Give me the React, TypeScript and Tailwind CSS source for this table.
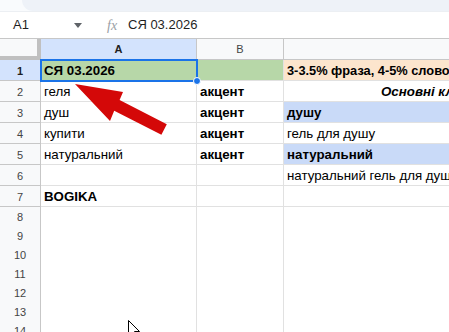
import React from "react";

const F = { fontFamily: '"Liberation Sans", Arial, sans-serif' };

type Cell = { t?: string; cls?: string; bg?: string };
type Row = { n: number; h: string; a?: Cell; b?: Cell; c?: Cell; sel?: boolean };

const rows: Row[] = [
  { n: 1, h: "h-[21px]", sel: true, a: { t: "СЯ 03.2026", cls: "font-bold", bg: "bg-[#b7d7a8]" }, b: { bg: "bg-[#b7d7a8]" }, c: { t: "3-3.5% фраза, 4-5% слово, 7-8% загалом", cls: "font-bold !text-[12.8px]", bg: "bg-[#fce5cd]" } },
  { n: 2, h: "h-[21px]", a: { t: "геля" }, b: { t: "акцент", cls: "font-bold" }, c: { t: "Основні ключові слова", cls: "font-bold italic pl-[97px]" } },
  { n: 3, h: "h-[21px]", a: { t: "душ" }, b: { t: "акцент", cls: "font-bold" }, c: { t: "душу", cls: "font-bold", bg: "bg-[#c9daf8]" } },
  { n: 4, h: "h-[21px]", a: { t: "купити" }, b: { t: "акцент", cls: "font-bold" }, c: { t: "гель для душу" } },
  { n: 5, h: "h-[21px]", a: { t: "натуральний" }, b: { t: "акцент", cls: "font-bold" }, c: { t: "натуральний", cls: "font-bold", bg: "bg-[#c9daf8]" } },
  { n: 6, h: "h-[21px]", c: { t: "натуральний гель для душу" } },
  { n: 7, h: "h-[21px]", a: { t: "BOGIKA", cls: "font-bold" } },
  { n: 8, h: "h-[19px]" },
  { n: 9, h: "h-[19px]" },
  { n: 10, h: "h-[19px]" },
  { n: 11, h: "h-[19px]" },
  { n: 12, h: "h-[19px]" },
  { n: 13, h: "h-[19px]" },
  { n: 14, h: "h-[19px]" },
];

function DataCell({ cell, extra }: { cell?: Cell; extra?: string }) {
  return (
    <div
      className={`border-r border-b border-[#e1e1e1] flex items-end pb-[1px] overflow-hidden whitespace-nowrap px-[3px] text-[13.3px] leading-[16px] text-[#000] ${cell?.bg ?? "bg-white"} ${cell?.cls ?? ""} ${extra ?? ""}`}
    >
      {cell?.t ?? ""}
    </div>
  );
}

export default function App() {
  return (
    <div className="relative w-[449px] h-[332px] overflow-hidden bg-white" style={F}>
      {/* top bar */}
      <div className="h-[12px] flex bg-[#f9fbfd] border-b border-[#eceff3]">
        <div className="w-[22px]" />
        <div className="flex-1 bg-[#eef2f8] rounded-bl-[12px]" />
      </div>
      {/* formula bar */}
      <div className="h-[26px] flex items-center bg-white text-[13px] text-[#1f1f1f]">
        <div className="w-[40px] pl-[13px]">A1</div>
        <div className="w-[46px] flex justify-end pr-[4px]">
          <svg width="8" height="5" viewBox="0 0 8 5"><path d="M0 0h8L4 5z" fill="#5f6368" /></svg>
        </div>
        <div className="w-[42px] pl-[21px] italic text-[#9aa0a6] text-[14px]" style={{ fontFamily: '"Liberation Serif", serif' }}>fx</div>
        <div>СЯ 03.2026</div>
      </div>
      {/* column headers */}
      <div className="grid grid-cols-[41px_156px_87px_1fr] h-[22px] border-t border-[#c7c7c7] text-[11px] text-[#444]">
        <div className="bg-[#f8f9fa] border-r-[4px] border-b-[4px] border-[#c0c0c0]" />
        <div className="bg-[#d3e3fd] border-r border-b border-[#c7c7c7] flex items-center justify-center font-bold">
          <span className="text-[#1f1f1f]">A</span>
        </div>
        <div className="bg-[#f8f9fa] border-r border-b border-[#c7c7c7] flex items-center justify-center">B</div>
        <div className="bg-[#f8f9fa] border-b border-[#c7c7c7]" />
      </div>
      {/* rows */}
      {rows.map((r) => (
        <div key={r.n} className={`grid grid-cols-[41px_156px_87px_1fr] ${r.h}`}>
          <div
            className={`border-r border-b border-[#c7c7c7] flex items-center justify-center pt-[2px] text-[11px] ${
              r.sel ? "bg-[#d3e3fd] font-bold text-[#1f1f1f]" : "bg-[#f8f9fa] text-[#444]"
            }`}
          >
            {r.n}
          </div>
          <DataCell cell={r.a} extra={r.sel ? "relative outline outline-2 outline-[#1a73e8] -outline-offset-1" : ""} />
          <DataCell cell={r.b} />
          <DataCell cell={r.c} extra="border-r-0" />
        </div>
      ))}
      {/* selection handle */}
      <div className="absolute left-[193px] top-[77px] w-[8px] h-[8px] rounded-full bg-[#1a73e8] border border-white" />
      {/* red arrow */}
      <svg className="absolute left-0 top-0 pointer-events-none" width="449" height="332" viewBox="0 0 449 332">
        <polygon
          points="75,84 123,92 119.6,100.1 166.8,124.2 161.4,134.8 114.2,110.8 110,121"
          fill="#d40808"
        />
        {/* mouse cursor */}
        <path d="M128.5 320.5 L128.5 336 L132 332.5 L134.5 338 L137 337 L134.5 331.5 L139.5 331.5 Z" fill="#fff" stroke="#000" strokeWidth="1" />
      </svg>
    </div>
  );
}
